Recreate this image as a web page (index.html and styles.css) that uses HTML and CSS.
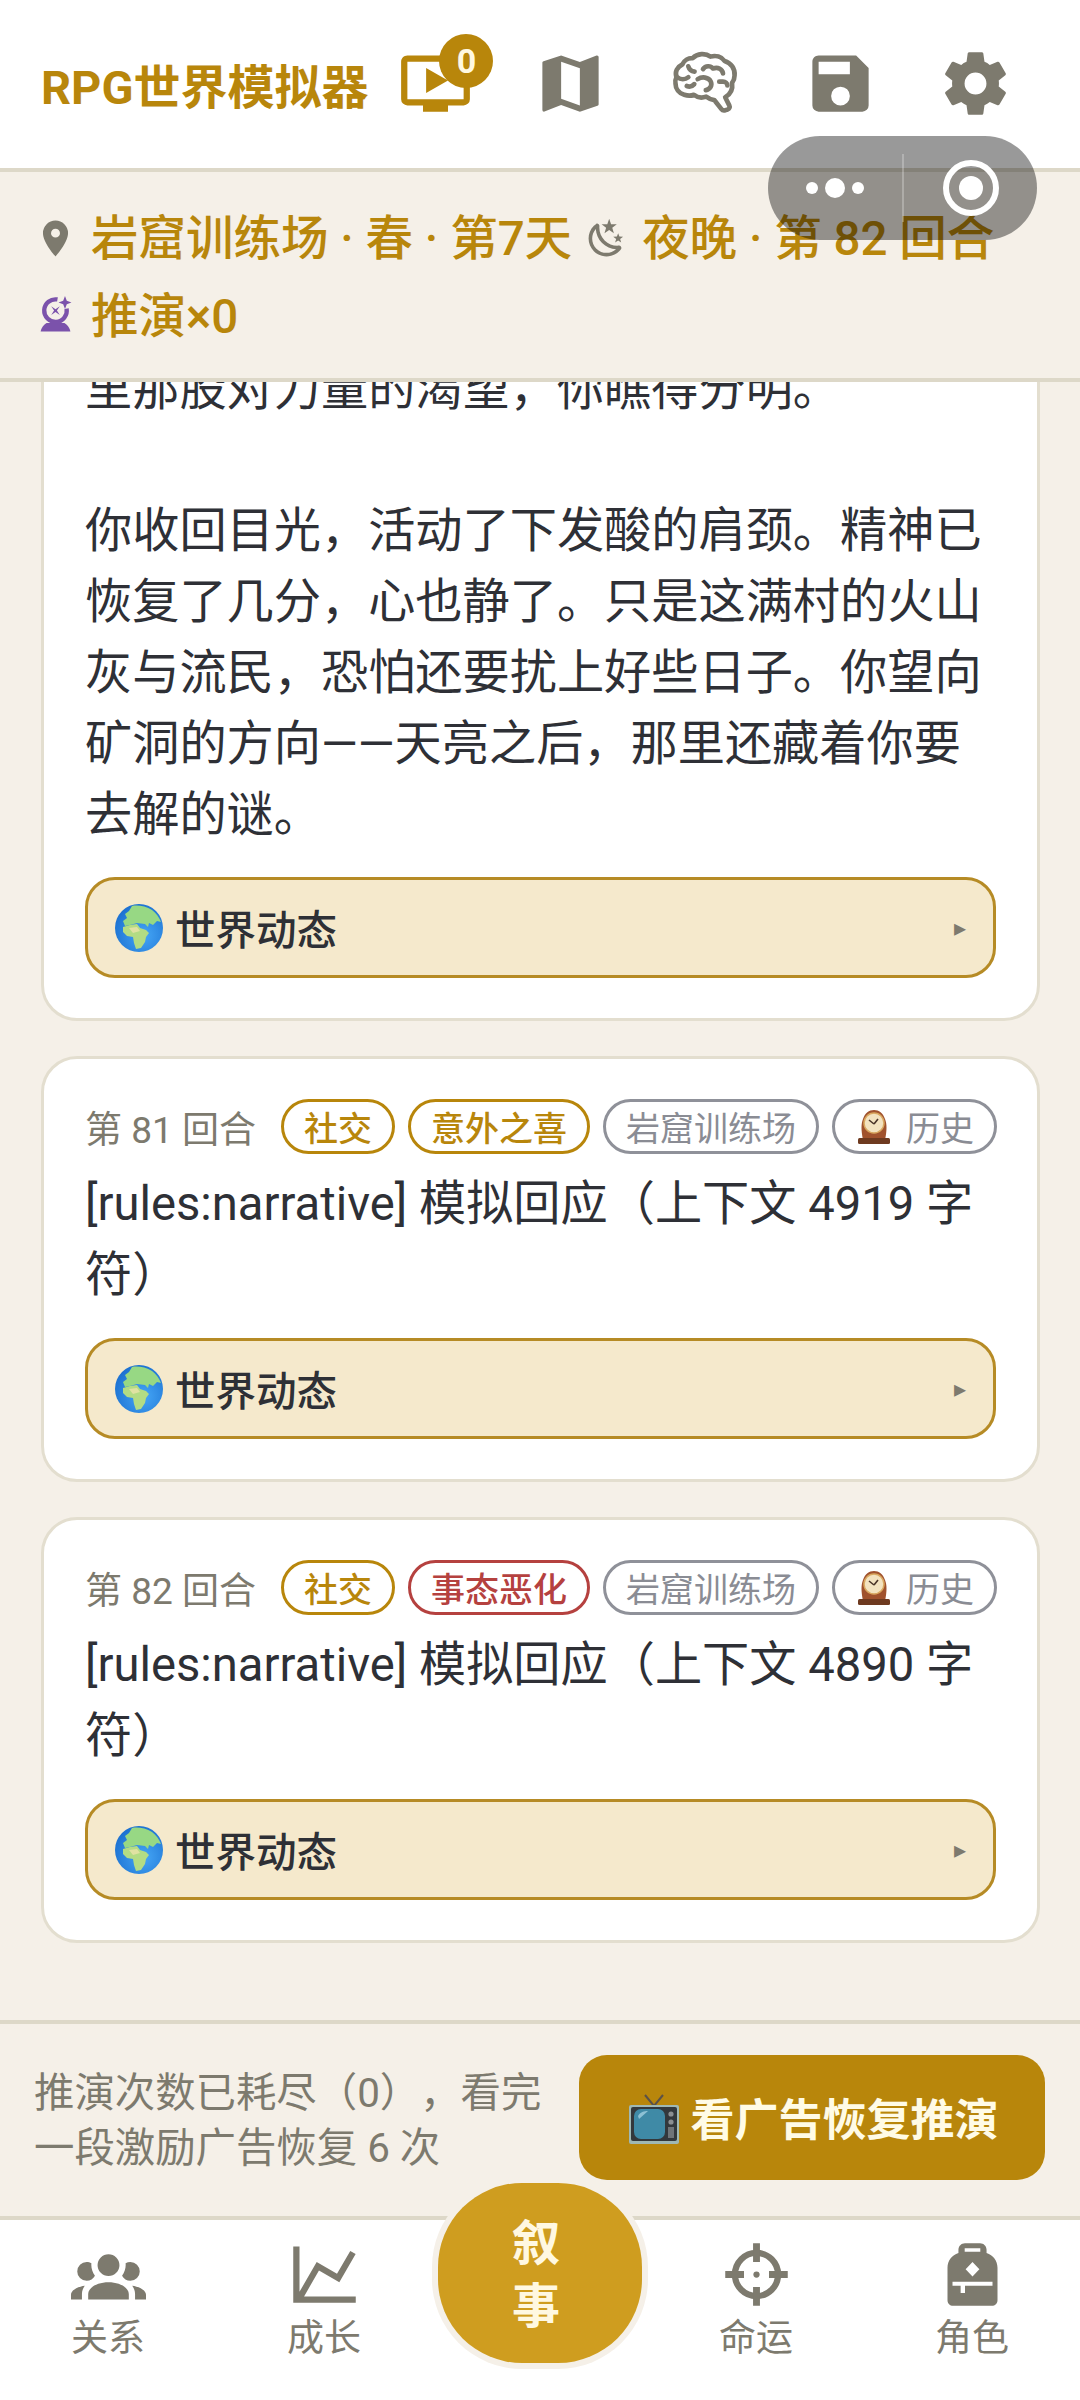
FILE: index.html
```html
<!DOCTYPE html>
<html lang="zh-CN">
<head>
    <meta charset="UTF-8">
    <meta name="viewport" content="width=device-width, initial-scale=1.0">
    <title>RPG世界模拟器</title>
    <link rel="stylesheet" href="styles.css">
</head>
<body>
    <div class="app">
        <header class="topbar">
            <div class="brand">RPG世界模拟器</div>
            <div class="tools">
                <div class="tool tool-ad">
                    <svg class="icon" viewBox="0 0 24 24"><path d="M21,3H3C1.89,3 1,3.89 1,5V17A2,2 0 0,0 3,19H8V21H16V19H21A2,2 0 0,0 23,17V5C23,3.89 22.1,3 21,3M21,17H3V5H21M16,11L9,15V7"/></svg>
                    <span class="ad-badge">0</span>
                </div>
                <div class="tool">
                    <svg class="icon" viewBox="0 0 24 24"><path d="M15,19L9,16.89V5L15,7.11M20.5,3C20.44,3 20.39,3 20.34,3L15,5.1L9,3L3.36,4.9C3.15,4.97 3,5.15 3,5.38V20.5A0.5,0.5 0 0,0 3.5,21L3.66,20.97L9,18.9L15,21L20.64,19.1C20.85,19 21,18.85 21,18.62V3.5A0.5,0.5 0 0,0 20.5,3Z"/></svg>
                </div>
                <div class="tool">
                    <svg class="icon icon-line" viewBox="0 0 24 24">
                        <path d="M7.9 3.9C9.4 2.3 12 2.2 13.6 3.4C15.3 2.9 17.1 3.4 18.1 4.8C20.2 5.4 21.5 7.3 21.3 9.4C21.3 10.3 21 11.1 20.5 11.8C20.8 13.8 19.9 15.5 18.3 16.4L19.6 19C19.9 19.6 19.6 20.1 19.1 20.3L18.2 20.6C17.8 20.7 17.4 20.6 17.1 20.2L14.8 17.3C13.8 17.2 13 16.8 12.2 16.2C10.9 16.7 9.4 16.5 8.3 15.6C7.4 16 6.3 16 5.2 15.6C3.5 15.1 2.4 13.7 2.4 12C2.2 11.3 2.4 10.6 2.7 10C2.4 9 2.5 8.2 2.8 7.6C3.2 6.8 3.8 6.3 4.6 5.9C5.1 4.6 6.5 3.8 7.9 3.9Z"/>
                        <path d="M3 10c1 .8 2.5 .8 3.5 0M6.5 6.5c.3 1 1 1.6 2 1.7M11.2 7.4c.8-1.2 2.4-1.2 3.2-.2c1.5-.5 3 0 3.2 1.6M9.5 10.6c1.4-.9 3.5-.7 4.2.8c.5 1.2-.2 2.5-1.6 2.7M16.4 11.4h1.2c.8 0 1.4.5 1.4 1.2M6 12.8c.8.3 1.8.1 2.4-.6"/>
                    </svg>
                </div>
                <div class="tool">
                    <svg class="icon" viewBox="0 0 24 24"><path d="M15,9H5V5H15M12,19A3,3 0 0,1 9,16A3,3 0 0,1 12,13A3,3 0 0,1 15,16A3,3 0 0,1 12,19M17,3H5C3.89,3 3,3.9 3,5V19A2,2 0 0,0 5,21H19A2,2 0 0,0 21,19V7L17,3Z"/></svg>
                </div>
                <div class="tool">
                    <svg class="icon" viewBox="0 0 24 24"><path d="M12,15.5A3.5,3.5 0 0,1 8.5,12A3.5,3.5 0 0,1 12,8.5A3.5,3.5 0 0,1 15.5,12A3.5,3.5 0 0,1 12,15.5M19.43,12.97C19.47,12.65 19.5,12.33 19.5,12C19.5,11.67 19.47,11.34 19.43,11L21.54,9.37C21.73,9.22 21.78,8.95 21.66,8.73L19.66,5.27C19.54,5.05 19.27,4.96 19.05,5.05L16.56,6.05C16.04,5.66 15.5,5.32 14.87,5.07L14.5,2.42C14.46,2.18 14.25,2 14,2H10C9.75,2 9.54,2.18 9.5,2.42L9.13,5.07C8.5,5.32 7.96,5.66 7.44,6.05L4.95,5.05C4.73,4.96 4.46,5.05 4.34,5.27L2.34,8.73C2.21,8.95 2.27,9.22 2.46,9.37L4.57,11C4.53,11.34 4.5,11.67 4.5,12C4.5,12.33 4.53,12.65 4.57,12.97L2.46,14.63C2.27,14.78 2.21,15.05 2.34,15.27L4.34,18.73C4.46,18.95 4.73,19.03 4.95,18.95L7.44,17.94C7.96,18.34 8.5,18.68 9.13,18.93L9.5,21.58C9.54,21.82 9.75,22 10,22H14C14.25,22 14.46,21.82 14.5,21.58L14.87,18.93C15.5,18.67 16.04,18.34 16.56,17.94L19.05,18.95C19.27,19.03 19.54,18.95 19.66,18.73L21.66,15.27C21.78,15.05 21.73,14.78 21.54,14.63L19.43,12.97Z"/></svg>
                </div>
            </div>
        </header>

        <section class="status">
            <div class="status-item">
                <svg class="status-icon" viewBox="0 0 24 24"><path d="M12,11.5A2.5,2.5 0 0,1 9.5,9A2.5,2.5 0 0,1 12,6.5A2.5,2.5 0 0,1 14.5,9A2.5,2.5 0 0,1 12,11.5M12,2A7,7 0 0,0 5,9C5,14.25 12,22 12,22C12,22 19,14.25 19,9A7,7 0 0,0 12,2Z"/></svg>
                <span>岩窟训练场 · 春 · 第7天</span>
            </div>
            <div class="status-item">
                <svg class="status-icon" viewBox="0 0 24 24"><path d="M17.75,4.09L15.22,6.03L16.13,9.09L13.5,7.28L10.87,9.09L11.78,6.03L9.25,4.09L12.44,4L13.5,1L14.56,4L17.75,4.09M21.25,11L19.61,12.25L20.2,14.23L18.5,13.06L16.8,14.23L17.39,12.25L15.75,11L17.81,10.95L18.5,9L19.19,10.95L21.25,11M18.97,15.95C19.8,15.87 20.69,17.05 20.16,17.8C19.84,18.25 19.5,18.67 19.08,19.07C15.17,23 8.84,23 4.94,19.07C1.03,15.17 1.03,8.83 4.94,4.93C5.34,4.53 5.76,4.17 6.21,3.85C6.96,3.32 8.14,4.21 8.06,5.04C7.79,7.9 8.75,10.87 10.95,13.06C13.14,15.26 16.1,16.22 18.97,15.95M17.33,17.97C14.5,17.81 11.7,16.64 9.53,14.5C7.36,12.31 6.2,9.5 6.04,6.68C3.23,9.82 3.34,14.64 6.35,17.66C9.37,20.67 14.19,20.78 17.33,17.97Z"/></svg>
                <span>夜晚 · 第 82 回合</span>
            </div>
            <div class="status-item">
                <svg class="status-icon status-orb" viewBox="0 0 24 24">
                    <path class="orb-ring" d="M18.2 7.6A6.3 6.3 0 1 1 13.1 2.5"/>
                    <path d="M17.3 .6L18.3 3.2L20.9 4.2L18.3 5.2L17.3 7.8L16.3 5.2L13.7 4.2L16.3 3.2Z"/>
                    <path d="M9.6 6.3L12 7.9L14.4 6.3L12.8 8.7L14.4 11.1L12 9.5L9.6 11.1L11.2 8.7Z"/>
                    <path d="M7 15.6H17C18.5 16.4 20 18.4 20.3 20.4H3.7C4 18.4 5.5 16.4 7 15.6Z"/>
                </svg>
                <span>推演×0</span>
            </div>
        </section>

        <main class="feed">
            <article class="card">
                <p class="body-text">里那股对力量的渴望，你瞧得分明。</p>
                <p class="body-text body-gap">你收回目光，活动了下发酸的肩颈。精神已恢复了几分，心也静了。只是这满村的火山灰与流民，恐怕还要扰上好些日子。你望向矿洞的方向——天亮之后，那里还藏着你要去解的谜。</p>
                <div class="world">
                    <svg class="globe" viewBox="0 0 48 48">
                        <defs>
                            <radialGradient id="sea1" cx="0.6" cy="0.65" r="0.7"><stop offset="0" stop-color="#45a6f6"/><stop offset="1" stop-color="#1a6fd0"/></radialGradient>
                        </defs>
                        <circle cx="24" cy="24" r="24" fill="url(#sea1)"/>
                        <path d="M17 2C22 .8 31 2 37 6C41 9 44 13 46 18L42 17L38 21L34 19L33 23L30 20L22 19L15 21L10 22L8 17L12 14L10 10L14 7Z" fill="#97d884"/>
                        <path d="M8 23L15 21L22 20L25 24L31 26L34 29L31 33L30 38L26 44L21 45L19 39L18 33L12 32L8 28Z" fill="#b3dc84"/>
                        <path d="M14 24L22 23L25 27L18 29Z" fill="#e0e2a2"/>
                    </svg>
                    <span class="world-label">世界动态</span>
                    <span class="world-arrow">▸</span>
                </div>
            </article>

            <article class="card">
                <div class="meta">
                    <span class="meta-turn">第 81 回合</span>
                    <span class="chip chip-gold">社交</span>
                    <span class="chip chip-gold">意外之喜</span>
                    <span class="chip chip-grey">岩窟训练场</span>
                    <span class="chip chip-grey chip-history">
                        <svg class="clock" viewBox="0 0 38 34">
                            <path d="M8 30C6 20 6 14 8 9C10 3 14 0 19 0C24 0 28 3 30 9C32 14 32 20 30 30Z" fill="#a0522d"/>
                            <circle cx="19" cy="13" r="10" fill="#f3e3c0" stroke="#d9a860" stroke-width="1.5"/>
                            <path d="M19 14L14 10M19 14L23 9" stroke="#4a3428" stroke-width="1.6" fill="none"/>
                            <rect x="3" y="28" width="32" height="6" rx="1.5" fill="#6e3a20"/>
                        </svg>
                        历史
                    </span>
                </div>
                <p class="body-text body-title">[rules:narrative] 模拟回应（上下文 4919 字符）</p>
                <div class="world">
                    <svg class="globe" viewBox="0 0 48 48">
                        <defs>
                            <radialGradient id="sea2" cx="0.6" cy="0.65" r="0.7"><stop offset="0" stop-color="#45a6f6"/><stop offset="1" stop-color="#1a6fd0"/></radialGradient>
                        </defs>
                        <circle cx="24" cy="24" r="24" fill="url(#sea2)"/>
                        <path d="M17 2C22 .8 31 2 37 6C41 9 44 13 46 18L42 17L38 21L34 19L33 23L30 20L22 19L15 21L10 22L8 17L12 14L10 10L14 7Z" fill="#97d884"/>
                        <path d="M8 23L15 21L22 20L25 24L31 26L34 29L31 33L30 38L26 44L21 45L19 39L18 33L12 32L8 28Z" fill="#b3dc84"/>
                        <path d="M14 24L22 23L25 27L18 29Z" fill="#e0e2a2"/>
                    </svg>
                    <span class="world-label">世界动态</span>
                    <span class="world-arrow">▸</span>
                </div>
            </article>

            <article class="card">
                <div class="meta">
                    <span class="meta-turn">第 82 回合</span>
                    <span class="chip chip-gold">社交</span>
                    <span class="chip chip-red">事态恶化</span>
                    <span class="chip chip-grey">岩窟训练场</span>
                    <span class="chip chip-grey chip-history">
                        <svg class="clock" viewBox="0 0 38 34">
                            <path d="M8 30C6 20 6 14 8 9C10 3 14 0 19 0C24 0 28 3 30 9C32 14 32 20 30 30Z" fill="#a0522d"/>
                            <circle cx="19" cy="13" r="10" fill="#f3e3c0" stroke="#d9a860" stroke-width="1.5"/>
                            <path d="M19 14L14 10M19 14L23 9" stroke="#4a3428" stroke-width="1.6" fill="none"/>
                            <rect x="3" y="28" width="32" height="6" rx="1.5" fill="#6e3a20"/>
                        </svg>
                        历史
                    </span>
                </div>
                <p class="body-text body-title">[rules:narrative] 模拟回应（上下文 4890 字符）</p>
                <div class="world">
                    <svg class="globe" viewBox="0 0 48 48">
                        <defs>
                            <radialGradient id="sea3" cx="0.6" cy="0.65" r="0.7"><stop offset="0" stop-color="#45a6f6"/><stop offset="1" stop-color="#1a6fd0"/></radialGradient>
                        </defs>
                        <circle cx="24" cy="24" r="24" fill="url(#sea3)"/>
                        <path d="M17 2C22 .8 31 2 37 6C41 9 44 13 46 18L42 17L38 21L34 19L33 23L30 20L22 19L15 21L10 22L8 17L12 14L10 10L14 7Z" fill="#97d884"/>
                        <path d="M8 23L15 21L22 20L25 24L31 26L34 29L31 33L30 38L26 44L21 45L19 39L18 33L12 32L8 28Z" fill="#b3dc84"/>
                        <path d="M14 24L22 23L25 27L18 29Z" fill="#e0e2a2"/>
                    </svg>
                    <span class="world-label">世界动态</span>
                    <span class="world-arrow">▸</span>
                </div>
            </article>
        </main>

        <section class="refill">
            <p class="refill-text">推演次数已耗尽（0），看完一段激励广告恢复 6 次</p>
            <div class="refill-btn">
                <svg class="tv" viewBox="0 0 50 50">
                    <path d="M16 1L25 12L34 1" stroke="#5b5148" stroke-width="2" fill="none"/>
                    <rect x="0" y="11" width="50" height="39" rx="2" fill="#9fb8b4"/>
                    <rect x="2" y="13" width="46" height="34" rx="2" fill="#33383c"/>
                    <rect x="5" y="15" width="31" height="30" rx="7" fill="#3f8aa6"/>
                    <path d="M9 22C11 18 15 17 19 17L10 25Z" fill="#8dc1d4"/>
                    <circle cx="42" cy="20" r="2.6" fill="#8b8f92"/>
                    <circle cx="42" cy="28" r="2.6" fill="#8b8f92"/>
                    <rect x="39" y="33" width="6" height="11" fill="#6f7478"/>
                </svg>
                <span>看广告恢复推演</span>
            </div>
        </section>

        <nav class="tabbar">
            <div class="tab">
                <svg class="icon" viewBox="0 0 24 24"><path d="M12,5.5A3.5,3.5 0 0,1 15.5,9A3.5,3.5 0 0,1 12,12.5A3.5,3.5 0 0,1 8.5,9A3.5,3.5 0 0,1 12,5.5M5,8C5.56,8 6.08,8.15 6.53,8.42C6.38,9.85 6.8,11.27 7.66,12.38C7.16,13.34 6.16,14 5,14A3,3 0 0,1 2,11A3,3 0 0,1 5,8M19,8A3,3 0 0,1 22,11A3,3 0 0,1 19,14C17.84,14 16.84,13.34 16.34,12.38C17.2,11.27 17.62,9.85 17.47,8.42C17.92,8.15 18.44,8 19,8M5.5,18.25C5.5,16.18 8.41,14.5 12,14.5C15.59,14.5 18.5,16.18 18.5,18.25V20H5.5V18.25M0,20V18.5C0,17.11 1.89,15.94 4.45,15.6C3.86,16.28 3.5,17.22 3.5,18.25V20H0M24,20V18.5C24,17.11 22.11,15.94 19.55,15.6C20.14,16.28 20.5,17.22 20.5,18.25V20H24Z"/></svg>
                <span>关系</span>
            </div>
            <div class="tab">
                <svg class="icon" viewBox="0 0 24 24"><path d="M16,11.78L20.24,4.45L21.97,5.45L16.74,14.5L10.23,10.75L5.46,19H22V21H2V3H4V17.54L9.5,8L16,11.78Z"/></svg>
                <span>成长</span>
            </div>
            <div class="tab tab-main">
                <div class="story-btn"><span>叙</span><span>事</span></div>
            </div>
            <div class="tab">
                <svg class="icon" viewBox="0 0 24 24">
                    <circle class="ring" cx="12" cy="12" r="6.9"/>
                    <path d="M10.9 2H13.1V8H10.9ZM10.9 16H13.1V22H10.9ZM2 10.9H8V13.1H2ZM16 10.9H22V13.1H16Z"/>
                    <circle cx="12" cy="12" r="1"/>
                </svg>
                <span>命运</span>
            </div>
            <div class="tab">
                <svg class="icon" viewBox="0 0 24 24">
                    <path fill-rule="evenodd" d="M9.6 2H14.4C15.6 2 16.5 2.9 16.5 4.1V5.1C18.6 5.8 20 7.6 20 9.8V20.2C20 21.2 19.2 22 18.2 22H5.8C4.8 22 4 21.2 4 20.2V9.8C4 7.6 5.4 5.8 7.5 5.1V4.1C7.5 2.9 8.4 2 9.6 2ZM9.5 3.6V4.7H14.5V3.6ZM12 8L9.8 10.3L12 12.6L14.2 10.3ZM5.6 14.3V15.6H8.2V17.9H9.6V15.6H18.4V14.3Z"/>
                </svg>
                <span>角色</span>
            </div>
        </nav>

        <div class="capsule">
            <div class="capsule-more"><i class="dot"></i><i class="dot dot-big"></i><i class="dot"></i></div>
            <div class="capsule-line"></div>
            <div class="capsule-close"><i class="target"></i></div>
        </div>
    </div>
</body>
</html>
```

FILE: styles.css
```css
* {
    box-sizing: border-box;
}

body {
    margin: 0;
    font-family: Roboto, "Noto Sans CJK SC", sans-serif;
    text-spacing-trim: space-all;
    background-color: #f5f0e8;
    color: #2e3036;
}

p {
    margin: 0;
}

.app {
    position: relative;
    display: flex;
    flex-direction: column;
    width: 1080px;
    height: 2400px;
    overflow: hidden;
}

/* top bar */
.topbar {
    flex: none;
    display: flex;
    justify-content: space-between;
    align-items: center;
    height: 172px;
    padding: 0 37px 2px 41px;
    background-color: #fff;
    border-bottom: 4px solid #ddd8c8;
}

.brand {
    flex: none;
    white-space: nowrap;
    font-size: 47px;
    font-weight: 700;
    color: #b8860b;
}

.tools {
    flex: none;
    display: flex;
}

.tool {
    position: relative;
    display: flex;
    justify-content: center;
    width: 135px;
}

.icon {
    display: block;
    width: 75px;
    height: 75px;
    fill: #7d7a6e;
}

.icon-line {
    fill: none;
    stroke: #7d7a6e;
    stroke-width: 1.5;
    stroke-linecap: round;
    stroke-linejoin: round;
}

.tool-ad .icon {
    fill: #b8860b;
}

.ad-badge {
    position: absolute;
    top: -12px;
    left: 71px;
    width: 54px;
    height: 54px;
    border-radius: 50%;
    background-color: #b8860b;
    color: #fff8e1;
    font-size: 34px;
    font-weight: 700;
    line-height: 54px;
    text-align: center;
}

/* status strip */
.status {
    flex: none;
    display: flex;
    flex-wrap: wrap;
    align-content: center;
    column-gap: 13px;
    height: 210px;
    padding: 5px 20px 0 34px;
    border-bottom: 4px solid #ddd8c8;
    background-color: #f5f0e8;
    font-size: 47.5px;
    font-weight: 500;
    line-height: 78px;
    color: #b8860b;
}

.status-item {
    display: flex;
    align-items: center;
    gap: 14px;
}

.status-icon {
    flex: none;
    width: 43px;
    height: 43px;
    fill: #7d7a6e;
}

.status-orb {
    fill: #7b52ab;
}

.orb-ring {
    fill: none;
    stroke: #7b52ab;
    stroke-width: 2.4;
}

/* story feed, scrolled so that the oldest card is cut by the strip */
.feed {
    flex: 1;
    min-height: 0;
    display: flex;
    flex-direction: column;
    justify-content: flex-end;
    gap: 35px;
    padding: 0 40px 77px 41px;
    overflow: hidden;
}

.card {
    flex: none;
    padding: 40px 41px 40px;
    background-color: #fff;
    border: 3px solid #e3decf;
    border-radius: 36px;
}

.body-text {
    font-size: 47.2px;
    line-height: 71px;
}

.body-gap {
    margin-top: 71px;
    margin-bottom: -3px;
}

.body-title {
    margin-top: 15px;
    margin-bottom: -2px;
}

.meta {
    display: flex;
    align-items: center;
    gap: 13px;
    white-space: nowrap;
}

.meta-turn {
    font-size: 37px;
    color: #7d7a6e;
    margin-right: 12px;
}

.chip {
    display: flex;
    align-items: center;
    height: 55px;
    padding: 0 20px;
    border: 3px solid;
    border-radius: 28px;
    font-size: 34px;
}

.chip-gold {
    color: #b8860b;
    border-color: #b8860b;
    font-weight: 500;
}

.chip-red {
    color: #b5413f;
    border-color: #b5413f;
    font-weight: 500;
}

.chip-grey {
    color: #8a8c94;
    border-color: #8f9199;
}

.chip-history {
    gap: 13px;
}

.clock {
    width: 38px;
    height: 34px;
}

.world {
    display: flex;
    align-items: center;
    height: 101px;
    margin-top: 29px;
    padding: 0 27px;
    background-color: #f5e9cc;
    border: 3px solid #b68b25;
    border-radius: 30px;
}

.globe {
    flex: none;
    width: 48px;
    height: 48px;
}

.world-label {
    flex: 1;
    margin-left: 12px;
    font-size: 40.5px;
    font-weight: 500;
}

.world-arrow {
    font-family: "DejaVu Sans", sans-serif;
    font-size: 24px;
    color: #7d7a6e;
}

/* out of forecasts bar */
.refill {
    flex: none;
    display: flex;
    align-items: center;
    gap: 25px;
    height: 200px;
    padding: 0 35px 6px 34px;
    background-color: #f5f0e8;
    border-top: 4px solid #ddd8c8;
    border-bottom: 4px solid #ddd8c8;
}

.refill-text {
    flex: 1;
    padding-top: 8px;
    font-size: 40.4px;
    line-height: 55px;
    color: #7d7a6e;
}

.refill-btn {
    flex: none;
    display: flex;
    justify-content: center;
    align-items: center;
    gap: 12px;
    width: 466px;
    height: 125px;
    background-color: #b8860b;
    border-radius: 28px;
    color: #fffbe6;
    font-size: 44px;
    font-weight: 700;
}

.tv {
    width: 50px;
    height: 50px;
    margin: 4px 0 0 3px;
}

/* bottom tabs */
.tabbar {
    flex: none;
    position: relative;
    display: grid;
    grid-template-columns: repeat(5, 1fr);
    height: 180px;
    padding-top: 17px;
    background-color: #fff;
}

.tab {
    display: flex;
    flex-direction: column;
    align-items: center;
    gap: 4px;
    font-size: 37px;
    line-height: 46px;
    color: #7d7a6e;
}

.tab-main {
    position: relative;
}

.story-btn {
    position: absolute;
    top: -54px;
    left: 6px;
    display: flex;
    flex-direction: column;
    justify-content: center;
    align-items: center;
    width: 204px;
    height: 180px;
    padding: 4px 8px 0 0;
    background-color: #cf9d1f;
    border-radius: 84px;
    box-shadow: 0 0 0 6px #f5f0e8;
    color: #fff8e1;
    font-size: 48px;
    font-weight: 700;
    line-height: 63px;
}

/* floating mini program capsule */
.capsule {
    position: absolute;
    top: 136px;
    left: 768px;
    display: flex;
    align-items: center;
    width: 269px;
    height: 104px;
    background-color: rgba(0, 0, 0, 0.4);
    border-radius: 52px;
}

.capsule-more {
    display: flex;
    justify-content: center;
    align-items: center;
    gap: 7px;
    width: 134px;
}

.dot {
    width: 12px;
    height: 12px;
    background-color: #fff;
    border-radius: 50%;
}

.dot-big {
    width: 20px;
    height: 20px;
}

.capsule-line {
    width: 2px;
    height: 68px;
    background-color: rgba(255, 255, 255, 0.25);
}

.capsule-close {
    flex: 1;
    display: flex;
    justify-content: center;
    align-items: center;
}

.target {
    position: relative;
    width: 56px;
    height: 56px;
    border: 6px solid #fff;
    border-radius: 50%;
}

.target::after {
    content: "";
    position: absolute;
    top: 10px;
    left: 10px;
    width: 24px;
    height: 24px;
    background-color: #fff;
    border-radius: 50%;
}

.ring {
    fill: none;
    stroke: #7d7a6e;
    stroke-width: 2;
}
```
